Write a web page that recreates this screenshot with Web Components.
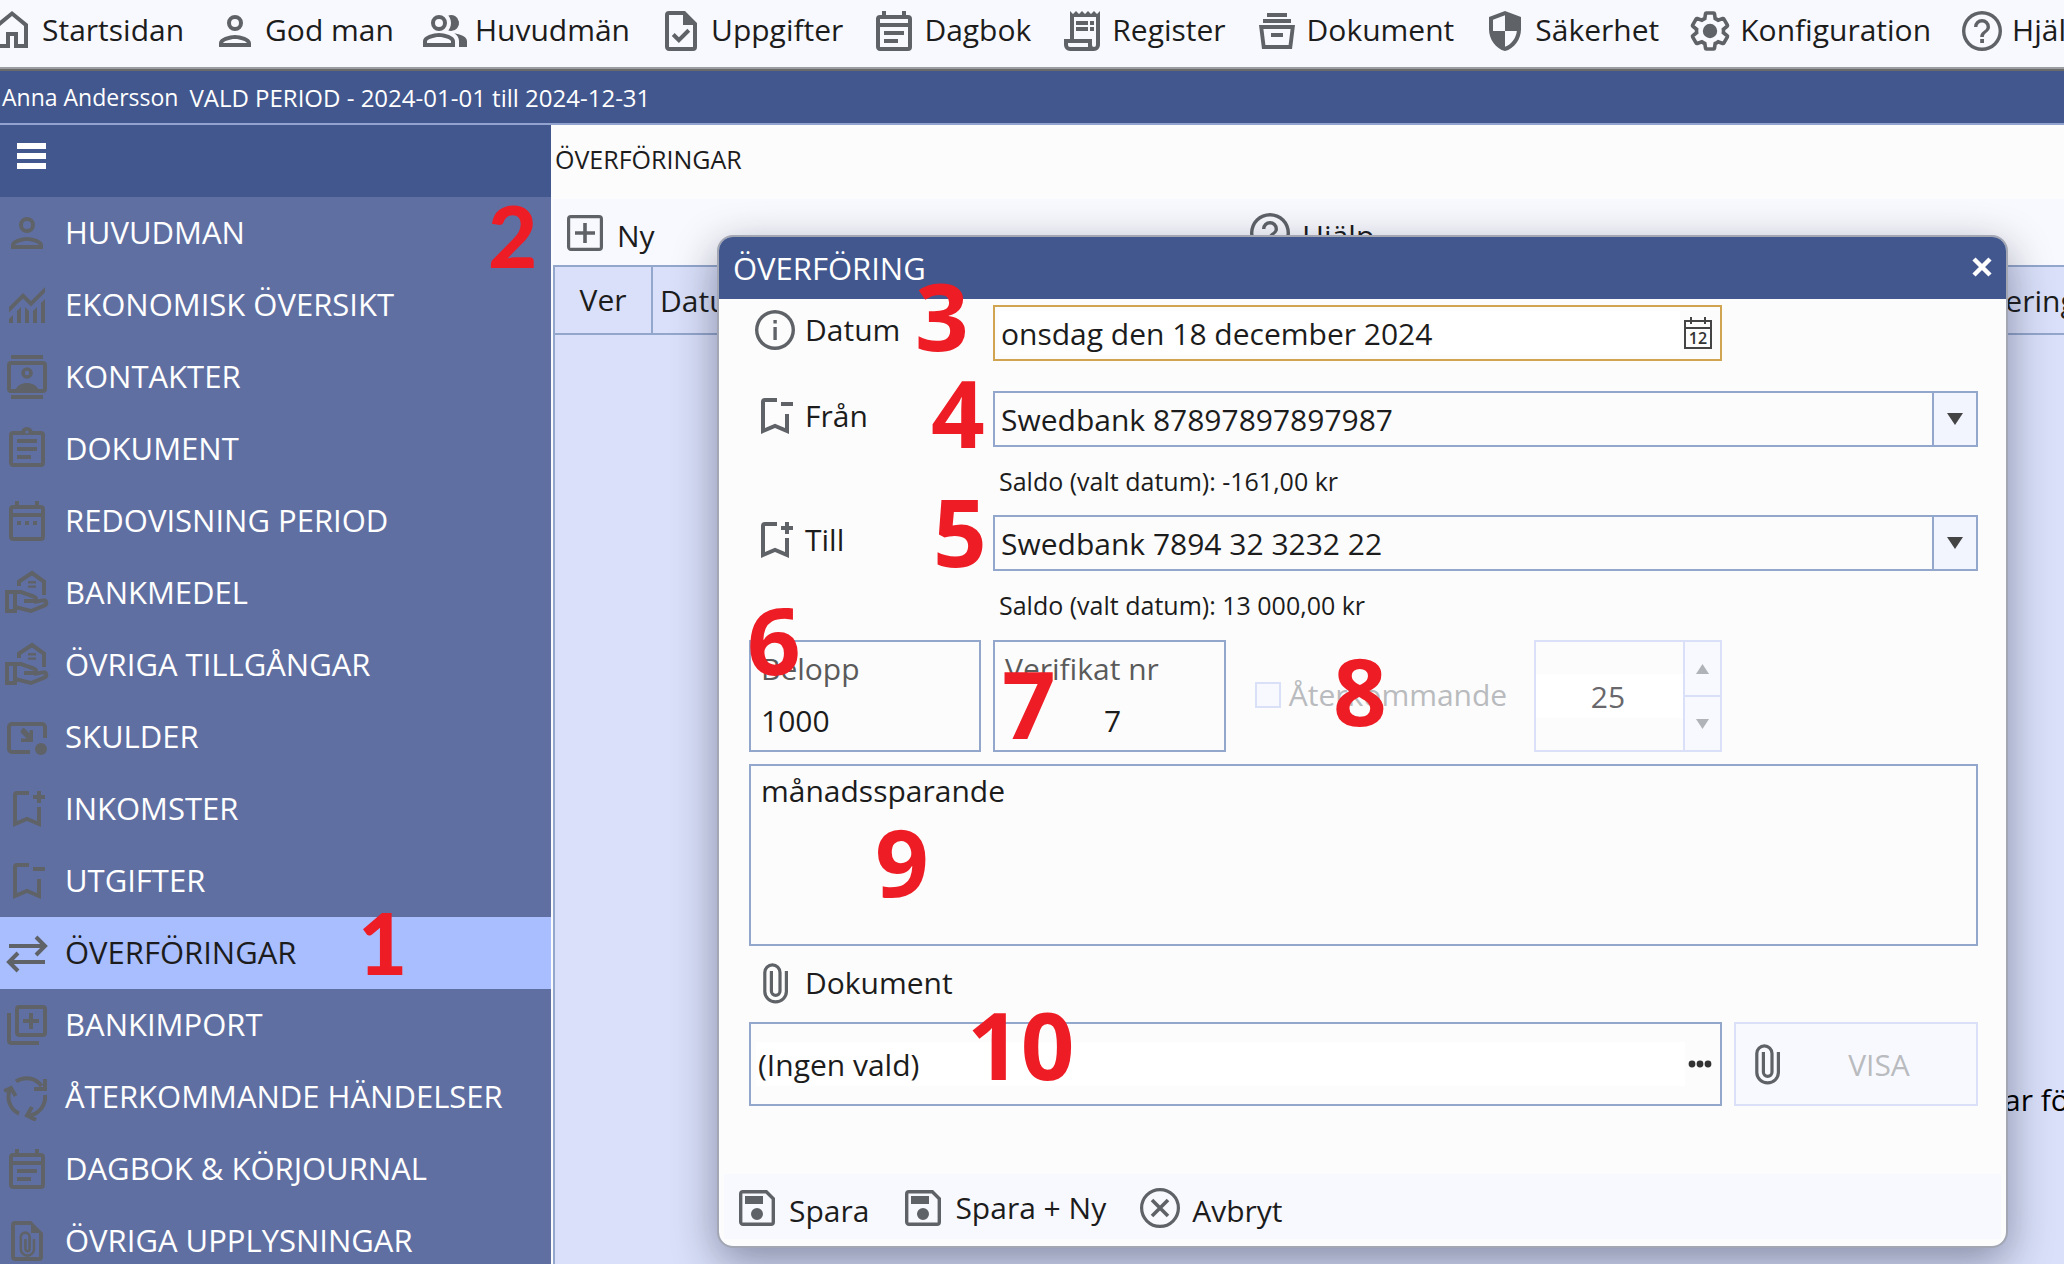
<!DOCTYPE html>
<html lang="sv">
<head>
<meta charset="utf-8">
<title>Överföringar</title>
<style>
html,body{margin:0;height:100%}
body{overflow:hidden;font-family:"Open Sans","Noto Sans",sans-serif;font-size:30px;color:#1c1c1c;background:#fcfcfc;
--blue:#42578d;--line:#93a6cc;--soft:#dae0f8;--pale:#f8f9fe;--paper:#fcfcfc;--icon:#5f6368}
</style>
</head>
<body>
<god-app></god-app>
<script>
const ICONS={
home:'<path d="M6 18.500h3v-6h6v6h3V9.500l-6-5-6 5zm-2 2V8.500L12 2l8 6.500v12h-7v-6h-2v6z"/>',
person:'<path d="M12 6a2 2 0 1 1 0 4 2 2 0 0 1 0-4m0 10c2.700 0 5.800 1.290 6 2H6c.23-.72 3.310-2 6-2m0-12a4 4 0 1 0 0 8 4 4 0 0 0 0-8zm0 10c-2.670 0-8 1.340-8 4v2h16v-2c0-2.660-5.330-4-8-4z"/>',
people:'<path d="M16.670 13.130C18.040 14.060 19 15.320 19 17v3h4v-3c0-2.180-3.570-3.470-6.330-3.870zM15 12a4 4 0 1 0-1.330-7.760C14.500 5.270 15 6.580 15 8s-.5 2.730-1.330 3.760c.42.14.86.24 1.330.24zM9 12a4 4 0 1 0 0-8 4 4 0 0 0 0 8zm0-6a2 2 0 1 1 0 4 2 2 0 0 1 0-4zm0 7c-2.670 0-8 1.340-8 4v3h16v-3c0-2.660-5.330-4-8-4zm6 5H3v-1c.2-.7 3.300-2 6-2s5.800 1.290 6 2z"/>',
task:'<path d="M14 2H6a2 2 0 0 0-2 2v16c0 1.100.9 2 2 2h12a2 2 0 0 0 2-2V8zm4 18H6V4h7v5h5zm-9.180-6.950L7.400 14.460 10.940 18l5.660-5.660-1.410-1.410-4.240 4.240z"/>',
note:'<path d="M19 4h-1V2h-2v2H8V2H6v2H5a2 2 0 0 0-2 2v14c0 1.100.9 2 2 2h14a2 2 0 0 0 2-2V6a2 2 0 0 0-2-2zm0 16H5V10h14zm0-12H5V6h14zM7 12h10v2H7zm0 4h7v2H7z"/>',
calendar:'<path d="M19 4h-1V2h-2v2H8V2H6v2H5a2 2 0 0 0-2 2v14c0 1.100.9 2 2 2h14a2 2 0 0 0 2-2V6a2 2 0 0 0-2-2zm0 16H5V10h14zm0-12H5V6h14zM7 12h2v2H7zm4 0h2v2h-2zm4 0h2v2h-2z"/>',
receipt:'<path d="M19.500 3.500 18 2l-1.500 1.500L15 2l-1.500 1.500L12 2l-1.500 1.500L9 2 7.500 3.500 6 2v14H3v3a3 3 0 0 0 3 3h12a3 3 0 0 0 3-3V2zM15 20H6a1 1 0 0 1-1-1v-1h10zm4-1a1 1 0 0 1-2 0v-3H8V5h11zM9 7h6v2H9zm7 0h2v2h-2zm-7 3h6v2H9zm7 0h2v2h-2z"/>',
box:'<path d="M7 3h10v2H7zM5 6h14v2H5zM3 9h18l-1.500 12h-15zm2.200 2 1 8h11.600l1-8zM9 13h6v2H9z" fill-rule="evenodd"/>',
shield:'<path d="M12 2 4 5v6.090c0 5.050 3.410 9.760 8 10.910 4.590-1.150 8-5.860 8-10.910V5zm0 2.140V12h5.940c-.44 3.700-2.840 6.800-5.940 7.930V12H6V6.390z" fill-rule="evenodd"/>',
gear:'<path transform="translate(1.200 1.200) scale(.9)" fill="none" stroke="currentColor" stroke-width="2" d="M19.430 12.980c.04-.32.07-.64.07-.98s-.03-.66-.07-.98l2.110-1.650c.19-.15.24-.42.12-.64l-2-3.460c-.09-.16-.26-.25-.44-.25l-.17.03-2.490 1c-.52-.4-1.080-.73-1.690-.98l-.38-2.650C14.460 2.180 14.250 2 14 2h-4c-.25 0-.46.18-.49.42l-.38 2.650c-.61.25-1.170.59-1.690.98l-2.490-1-.18-.03c-.17 0-.34.09-.43.25l-2 3.460c-.13.22-.07.49.12.64l2.110 1.650a8 8 0 0 0 0 1.960l-2.110 1.650c-.19.15-.24.42-.12.64l2 3.460c.09.16.26.25.44.25l.17-.03 2.490-1c.52.4 1.080.73 1.690.98l.38 2.650c.03.24.24.42.49.42h4c.25 0 .46-.18.49-.42l.38-2.650c.61-.25 1.170-.59 1.690-.98l2.490 1 .18.03c.17 0 .34-.09.43-.25l2-3.460c.12-.22.07-.49-.12-.64z"/><circle cx="12" cy="12" r="3.600"/>',
help:'<path d="M11.100 18h1.900v-2h-1.900zM12 2a10 10 0 1 0 0 20 10 10 0 0 0 0-20zm0 18.300a8.300 8.300 0 1 1 0-16.600 8.300 8.300 0 0 1 0 16.600zM12 6a4 4 0 0 0-4 4h1.700a2.300 2.300 0 1 1 4.600 0c0 2-3.200 1.900-3.200 5h1.800c0-2.250 3.100-2.500 3.100-5a4 4 0 0 0-4-4z"/>',
chart:'<path d="M3 21v-2l2-2v4zm4 0v-6l2-2v8zm4 0v-8l2 2v6zm4 0v-6l2-2v8zm4 0V11l2-2v12zM3 15.800V13l7-7 4 4 7-7v2.800l-7 7-4-4z"/>',
contact:'<path d="M4 1h16v2H4zm0 20h16v2H4z"/><rect x="3" y="5" width="18" height="14" rx="1" fill="none" stroke="currentColor" stroke-width="2"/><circle cx="12" cy="10" r="2" fill="none" stroke="currentColor" stroke-width="1.800"/><path d="M6 19c1-3 3.500-4 6-4s5 1 6 4z"/>',
clipboard:'<path d="M7 15h7v2H7zm0-4h10v2H7zm0-4h10v2H7zm12-4h-4.180a3 3 0 0 0-5.640 0H5a2 2 0 0 0-2 2v14c0 1.100.9 2 2 2h14a2 2 0 0 0 2-2V5a2 2 0 0 0-2-2zm-7-.25a.75.75 0 1 1 0 1.500.75.75 0 0 1 0-1.500zM19 19H5V5h14z"/>',
hand:'<g fill="none" stroke="currentColor" stroke-width="2"><path d="M8 8.500V6.300L14.500 2l6 4.300V13"/><path d="M2 11.500h4v9.500H2z"/><path d="M6 11.500h3l6.500 2.300c1.500.6 1 2.200-.5 2.200h-4.500M15.500 16.500l4.500-.8c2-.2 2.200 2.100.6 2.600L14 21l-8-2"/></g><path d="M12.500 6h4v1.200h-4zm0 2.200h4v1.200h-4z"/>',
debt:'<path d="M13.500 19.500H4.500a1.500 1.500 0 0 1-1.500-1.500V7a1.500 1.500 0 0 1 1.500-1.500h15A1.500 1.500 0 0 1 21 7v5.500" fill="none" stroke="currentColor" stroke-width="2"/><circle cx="19" cy="18" r="3"/><path d="m9 8.500 1.300-1.200 3 3V8.500H15V14.500H9v-1.700h2.800l-3-3z"/>',
plusmark:'<path d="M17 11v6.970l-5-2.140-5 2.140V5h6V3H7a2 2 0 0 0-2 2v16l7-3 7 3V11zm4-4h-2v2h-2V7h-2V5h2V3h2v2h2z"/>',
minusmark:'<path d="M17 11v6.970l-5-2.140-5 2.140V5h6V3H7a2 2 0 0 0-2 2v16l7-3 7 3V11zm4-4h-6V5h6z"/>',
swap:'<path d="M3 8.500h18M16.500 4l4.500 4.500-4.500 4.500M21 16.500H3M7.500 12 3 16.500 7.500 21" fill="none" stroke="currentColor" stroke-width="2"/>',
import:'<path d="M4 6H2v14c0 1.100.9 2 2 2h14v-2H4zm16-4H8a2 2 0 0 0-2 2v12c0 1.100.9 2 2 2h12a2 2 0 0 0 2-2V4a2 2 0 0 0-2-2zm0 14H8V4h12zm-7-2h2v-3h3V9h-3V6h-2v3h-3v2h3z"/>',
cycle:'<g fill="none" stroke="currentColor" stroke-width="2"><path d="M6.500 4.200a9.300 9.300 0 0 1 12.800 2.300M21 11a9.300 9.300 0 0 1-7.500 10.200M8 20.300A9.300 9.300 0 0 1 3.400 8.500"/><path d="M21 3v5h-5.500M16.500 23.500 12 21.200l2.500-4.200M.6 9 4 7.500l2.300 4"/></g>',
filed:'<path d="M14 2H6a2 2 0 0 0-2 2v16c0 1.100.9 2 2 2h12a2 2 0 0 0 2-2V8zm4 18H6V4h8v4h4z"/><path d="M15.500 11v5a3.300 3.300 0 0 1-6.600 0v-6a2.200 2.200 0 0 1 4.400 0v6a1 1 0 0 1-2.100 0v-5" fill="none" stroke="currentColor" stroke-width="1.300"/>',
clip:'<path d="M17.700 6v10.300a5.200 4.900 0 0 1-10.800 0V6.700a3.800 3.800 0 0 1 7.600 0v9.300a2.100 2.100 0 0 1-4.300 0V6" fill="none" stroke="currentColor" stroke-width="1.600"/>',
add:'<path d="M19 3H5a2 2 0 0 0-2 2v14c0 1.100.9 2 2 2h14a2 2 0 0 0 2-2V5a2 2 0 0 0-2-2zm.4 16.400H4.600V4.600h14.800zM11.100 17h1.800v-4.100H17v-1.800h-4.100V7h-1.800v4.100H7v1.800h4.100z"/>',
info:'<path d="M11.200 10.500h1.700V17h-1.700zm0-3.500h1.700v1.800h-1.700zM12 2a10 10 0 1 0 0 20 10 10 0 0 0 0-20zm0 18.300a8.300 8.300 0 1 1 0-16.600 8.300 8.300 0 0 1 0 16.600z"/>',
save:'<path d="M17 3H5a2 2 0 0 0-2 2v14c0 1.100.9 2 2 2h14a2 2 0 0 0 2-2V7zm2.300 16.300H4.700V4.700h11.600l3 3zM12 12a3 3 0 1 0 0 6 3 3 0 0 0 0-6zM6 6h9v4H6z"/>',
cancel:'<circle cx="12" cy="12" r="9.200" fill="none" stroke="currentColor" stroke-width="1.600"/><path d="m8 8 8 8M16 8l-8 8" fill="none" stroke="currentColor" stroke-width="1.800"/>'
};
const define=(name,html,setup)=>customElements.define(name,class extends HTMLElement{
  connectedCallback(){
    if(this.shadowRoot)return;
    const t=document.createElement('template');
    t.innerHTML='<style>*{box-sizing:border-box}button,input,select,textarea{font:inherit;color:inherit;margin:0;border:0;background:none;padding:0;border-radius:0;outline:none}</style>'+(typeof html==='function'?html(this):html);
    this.attachShadow({mode:'open'}).append(t.content.cloneNode(true));
    if(setup)setup(this);
  }
});

define('app-icon',el=>`<style>:host{display:block;flex:none;width:48px;height:48px;color:var(--icon)}svg{display:block;width:100%;height:100%}</style>
<svg viewBox="0 0 24 24" fill="currentColor" aria-hidden="true">${ICONS[el.getAttribute('name')]}</svg>`);

define('nav-link',el=>`<style>:host{display:block;flex:none}a{display:flex;align-items:center;gap:6px;color:inherit;text-decoration:none;white-space:nowrap;line-height:40px}span{padding-bottom:2px}</style>
<a href="#"><app-icon name="${el.getAttribute('icon')}"></app-icon><span><slot></slot></span></a>`);

define('top-nav',`<style>:host{display:block;border-bottom:2px solid #6a6a6a;background:var(--pale)}
nav{display:flex;align-items:center;gap:27px;height:69px;padding-bottom:7px;margin-left:-12px;overflow:hidden}
.rule{height:2px;margin-top:-2px;background:#9b9da1}</style>
<nav><nav-link icon="home">Startsidan</nav-link><nav-link icon="person">God man</nav-link><nav-link icon="people">Huvudmän</nav-link><nav-link icon="task">Uppgifter</nav-link><nav-link icon="note">Dagbok</nav-link><nav-link icon="receipt">Register</nav-link><nav-link icon="box">Dokument</nav-link><nav-link icon="shield">Säkerhet</nav-link><nav-link icon="gear">Konfiguration</nav-link><nav-link icon="help">Hjälp</nav-link></nav><div class="rule"></div>`);

define('period-bar',`<style>:host{display:flex;align-items:center;gap:11px;height:54px;padding:0 2px;background:var(--blue);border-bottom:2px solid #93a3cf;color:#fff;font-size:24px;white-space:nowrap}
.who{font-size:23px}</style><span class="who">Anna Andersson</span><span>VALD PERIOD - 2024-01-01 till 2024-12-31</span>`);

define('menu-item',el=>`<style>:host{display:block}a{display:flex;align-items:center;gap:14px;height:72px;padding-left:3px;color:#fff;text-decoration:none;white-space:nowrap;font-size:31px}span{padding-bottom:3px}
:host([active]) a{background:#a9beff;color:#1c1c1c}</style>
<a href="#"><app-icon name="${el.getAttribute('icon')}"></app-icon><span><slot></slot></span></a>`);

define('side-menu',`<style>:host{display:block;width:551px;flex:none;background:#606fa2;overflow:hidden}
header{height:72px;background:var(--blue);padding:18px 17px}
button{display:flex;flex-direction:column;gap:4px;width:29px}
i{height:6px;width:100%;background:#fff}</style>
<header><button aria-label="Meny"><i></i><i></i><i></i></button></header>
<nav><menu-item icon="person">HUVUDMAN</menu-item><menu-item icon="chart">EKONOMISK ÖVERSIKT</menu-item><menu-item icon="contact">KONTAKTER</menu-item><menu-item icon="clipboard">DOKUMENT</menu-item><menu-item icon="calendar">REDOVISNING PERIOD</menu-item><menu-item icon="hand">BANKMEDEL</menu-item><menu-item icon="hand">ÖVRIGA TILLGÅNGAR</menu-item><menu-item icon="debt">SKULDER</menu-item><menu-item icon="plusmark">INKOMSTER</menu-item><menu-item icon="minusmark">UTGIFTER</menu-item><menu-item icon="swap" active>ÖVERFÖRINGAR</menu-item><menu-item icon="import">BANKIMPORT</menu-item><menu-item icon="cycle">ÅTERKOMMANDE HÄNDELSER</menu-item><menu-item icon="note">DAGBOK &amp; KÖRJOURNAL</menu-item><menu-item icon="filed">ÖVRIGA UPPLYSNINGAR</menu-item></nav>`);

define('tool-button',el=>`<style>:host{display:block;flex:none}button{display:flex;align-items:center;gap:8px;white-space:nowrap;line-height:40px}span{padding-top:var(--drop,6px)}</style>
<button type="button"><app-icon name="${el.getAttribute('icon')}"></app-icon><span><slot></slot></span></button>`);

define('transfer-list',`<style>:host{display:flex;flex-direction:column;flex:1;min-width:0;padding-left:2px;background:var(--paper);overflow:hidden}
h1{margin:0;padding-left:2px;height:74px;line-height:68px;font-size:25px;font-weight:400}
.tools{display:flex;align-items:center;height:66px;padding:2px 0 0 8px;background:var(--pale)}
.tools :first-child{width:685px}
table{flex:1;display:flex;flex-direction:column;border-left:2px solid var(--line);background:#dae0f9}
thead{border-block:2px solid var(--line)}
tr{display:flex}
th{flex:none;font-weight:400;text-align:left;height:66px;line-height:65px;padding-left:7px;white-space:nowrap}
th:nth-child(1){width:98px;padding:0;text-align:center;border-right:2px solid var(--line)}
th:nth-child(2){width:1294px}
td{flex:none;padding:744px 0 0 1449px;white-space:nowrap;color:#000}
tbody{overflow:hidden}</style>
<h1>ÖVERFÖRINGAR</h1>
<div class="tools"><tool-button icon="add">Ny</tool-button><tool-button icon="help">Hjälp</tool-button></div>
<table><thead><tr><th>Ver</th><th>Datum</th><th>Notering</th></tr></thead><tbody><tr><td>ar för</td></tr></tbody></table>`);

define('transfer-dialog',`<style>
:host{display:block;border:2px solid #a3a7b3;border-radius:16px;background:var(--paper);overflow:hidden;box-shadow:0 14px 44px rgba(20,25,50,.42);background-clip:padding-box}
header{display:flex;align-items:center;justify-content:space-between;height:62px;padding:0 14px;background:var(--blue);color:#fff}
h2{margin:0;font-size:31px;font-weight:400;line-height:60px}
header button{width:20px;height:24px}
header svg{display:block}
form{display:grid;grid-template-columns:232px minmax(0,1fr) 244px;column-gap:12px;padding:6px 28px 68px 30px}
label.cap{display:flex;align-items:center;gap:6px;height:56px;padding:0 0 7px 2px}
.box{border:2px solid var(--line)}
.date{display:flex;align-items:center;height:56px;border-color:#d0a450;padding:4px}
.date input{flex:1;min-width:0;height:44px;background:#fff;padding-left:2px}
.date button{display:grid;place-items:center;width:36px;height:40px}
.combo{grid-column:2/4;display:flex;height:56px;margin-top:30px}
label.from{margin-top:30px}
.combo.to{margin-top:0}
.combo select{flex:1;appearance:none;padding-left:6px;min-width:0}
.combo span{display:grid;place-items:center;width:44px;border-left:2px solid var(--line);background:#f2f5fe;pointer-events:none}
.saldo{grid-column:2/4;height:68px;line-height:68px;padding-left:6px;font-size:25px}
.saldo.last{height:69px}
.num{height:112px;display:flex;flex-direction:column;padding-left:10px}
.num label{line-height:54px;color:#5a5a5a}
.num input{height:48px;width:100%}
.mid{grid-column:2;display:flex;justify-content:space-between;align-items:center}
.mid .num{width:233px}.mid .num input{text-align:center;padding-right:4px}
.rep{display:flex;align-items:center;gap:8px;color:#b9bbbe;padding:0 0 3px 2px}
.rep input{appearance:none;width:26px;height:26px;border:2px solid var(--soft);background:var(--pale)}
.spin{display:flex;align-items:center;width:188px;height:112px;border:2px solid var(--soft)}
.spin input{flex:1;min-width:0;height:44px;background:#fff;text-align:center;color:#68686c;padding-right:3px}
.spin div{display:flex;flex-direction:column;align-self:stretch;width:37px;border-left:2px solid var(--soft);background:var(--pale)}
.spin button{flex:1;display:grid;place-items:center}
.spin button+button{border-top:2px solid var(--soft)}
textarea{grid-column:1/4;display:block;height:182px;margin-top:12px;border:2px solid var(--line);padding:5px 10px;line-height:40px;resize:none}
label.doc{grid-column:1/4;height:76px;padding-bottom:3px}
.file{grid-column:1/3;display:flex;align-items:center;height:84px;padding:0 5px}
.file input{flex:1;min-width:0;height:44px;background:#fff;padding-left:2px}
.file button{width:30px;height:40px;display:grid;place-items:center}
.show{display:flex;align-items:center;height:84px;border:2px solid var(--soft);background:var(--pale);color:#b9bbbe;padding-left:7px}
.show span{flex:1;text-align:center;padding-right:9px}
footer{display:flex;align-items:center;height:65px;margin:0 5px 7px;padding:2px 0 0 9px;background:var(--pale);gap:30px}
footer :nth-child(2){--drop:0px}
</style>
<header><h2>ÖVERFÖRING</h2><button aria-label="Stäng"><svg width="20" height="24" viewBox="0 0 20 24"><path d="m2 3 16 16M18 3 2 19" stroke="#fff" stroke-width="4.500"/></svg></button></header>
<form>
<label class="cap" for="d"><app-icon name="info"></app-icon>Datum</label>
<div class="box date"><input id="d" value="onsdag den 18 december 2024"><button type="button" aria-label="Kalender"><svg width="28" height="32" viewBox="0 0 28 32"><path d="M1 4h26v27H1zM1 11h26M7 0v7M21 0v7" fill="none" stroke="#444" stroke-width="2"/><text x="14" y="27" font-size="16" font-weight="600" text-anchor="middle" fill="#333">12</text></svg></button></div><i></i>
<label class="cap from" for="f"><app-icon name="minusmark"></app-icon>Från</label>
<div class="box combo"><select id="f"><option>Swedbank 87897897897987</option></select><span><svg width="16" height="12"><path d="M0 0h16L8 12z" fill="#444"/></svg></span></div>
<div class="saldo">Saldo (valt datum): -161,00 kr</div>
<label class="cap" for="t"><app-icon name="plusmark"></app-icon>Till</label>
<div class="box combo to"><select id="t"><option>Swedbank 7894 32 3232 22</option></select><span><svg width="16" height="12"><path d="M0 0h16L8 12z" fill="#444"/></svg></span></div>
<div class="saldo last">Saldo (valt datum): 13 000,00 kr</div>
<div class="box num"><label for="b">Belopp</label><input id="b" value="1000"></div>
<div class="mid"><div class="box num"><label for="v">Verifikat nr</label><input id="v" value="7"></div>
<label class="rep"><input type="checkbox" disabled>Återkommande</label>
<div class="spin"><input aria-label="Dag" value="25" disabled><div><button type="button" aria-label="Öka" disabled><svg width="13" height="10"><path d="M0 10h13L6.500 0z" fill="#b0b3b8"/></svg></button><button type="button" aria-label="Minska" disabled><svg width="13" height="10"><path d="M0 0h13L6.500 10z" fill="#b0b3b8"/></svg></button></div></div></div>
<textarea aria-label="Notering">månadssparande</textarea>
<label class="cap doc" for="k"><app-icon name="clip"></app-icon>Dokument</label>
<div class="box file"><input id="k" value="(Ingen vald)"><button type="button" aria-label="Välj dokument"><svg width="24" height="8" fill="#333"><circle cx="4" cy="4" r="3.400"/><circle cx="12" cy="4" r="3.400"/><circle cx="20" cy="4" r="3.400"/></svg></button></div>
<button type="button" class="show" disabled><app-icon name="clip"></app-icon><span>VISA</span></button>
</form>
<footer><tool-button icon="save">Spara</tool-button><tool-button icon="save">Spara + Ny</tool-button><tool-button icon="cancel">Avbryt</tool-button></footer>`);

define('step-pin',`<style>:host{position:absolute;color:#ee1c24;font-weight:700;font-size:94px;line-height:94px;pointer-events:none}:host([round]){font-family:Lato,sans-serif;font-weight:900;font-size:85px;line-height:85px}</style><slot></slot>`,
 el=>{const[x,y]=el.getAttribute('at').split(' ');el.style.left=x+'px';el.style.top=y+'px'});

define('god-app',`<style>:host{display:flex;flex-direction:column;height:100vh;position:relative;overflow:hidden}
main{display:flex;flex:1;min-height:0}
transfer-dialog{position:absolute;left:717px;right:56px;top:235px}</style>
<top-nav></top-nav><period-bar></period-bar>
<main><side-menu></side-menu><transfer-list></transfer-list></main>
<transfer-dialog></transfer-dialog>
<step-pin round at="358 900">1</step-pin><step-pin round at="488 193">2</step-pin>
<step-pin at="915 268">3</step-pin><step-pin at="931 365">4</step-pin><step-pin at="933 484">5</step-pin><step-pin at="747 592">6</step-pin><step-pin at="1002 656">7</step-pin><step-pin at="1333 643">8</step-pin><step-pin at="875 814">9</step-pin><step-pin at="967 997">10</step-pin>`);
</script>
</body>
</html>
